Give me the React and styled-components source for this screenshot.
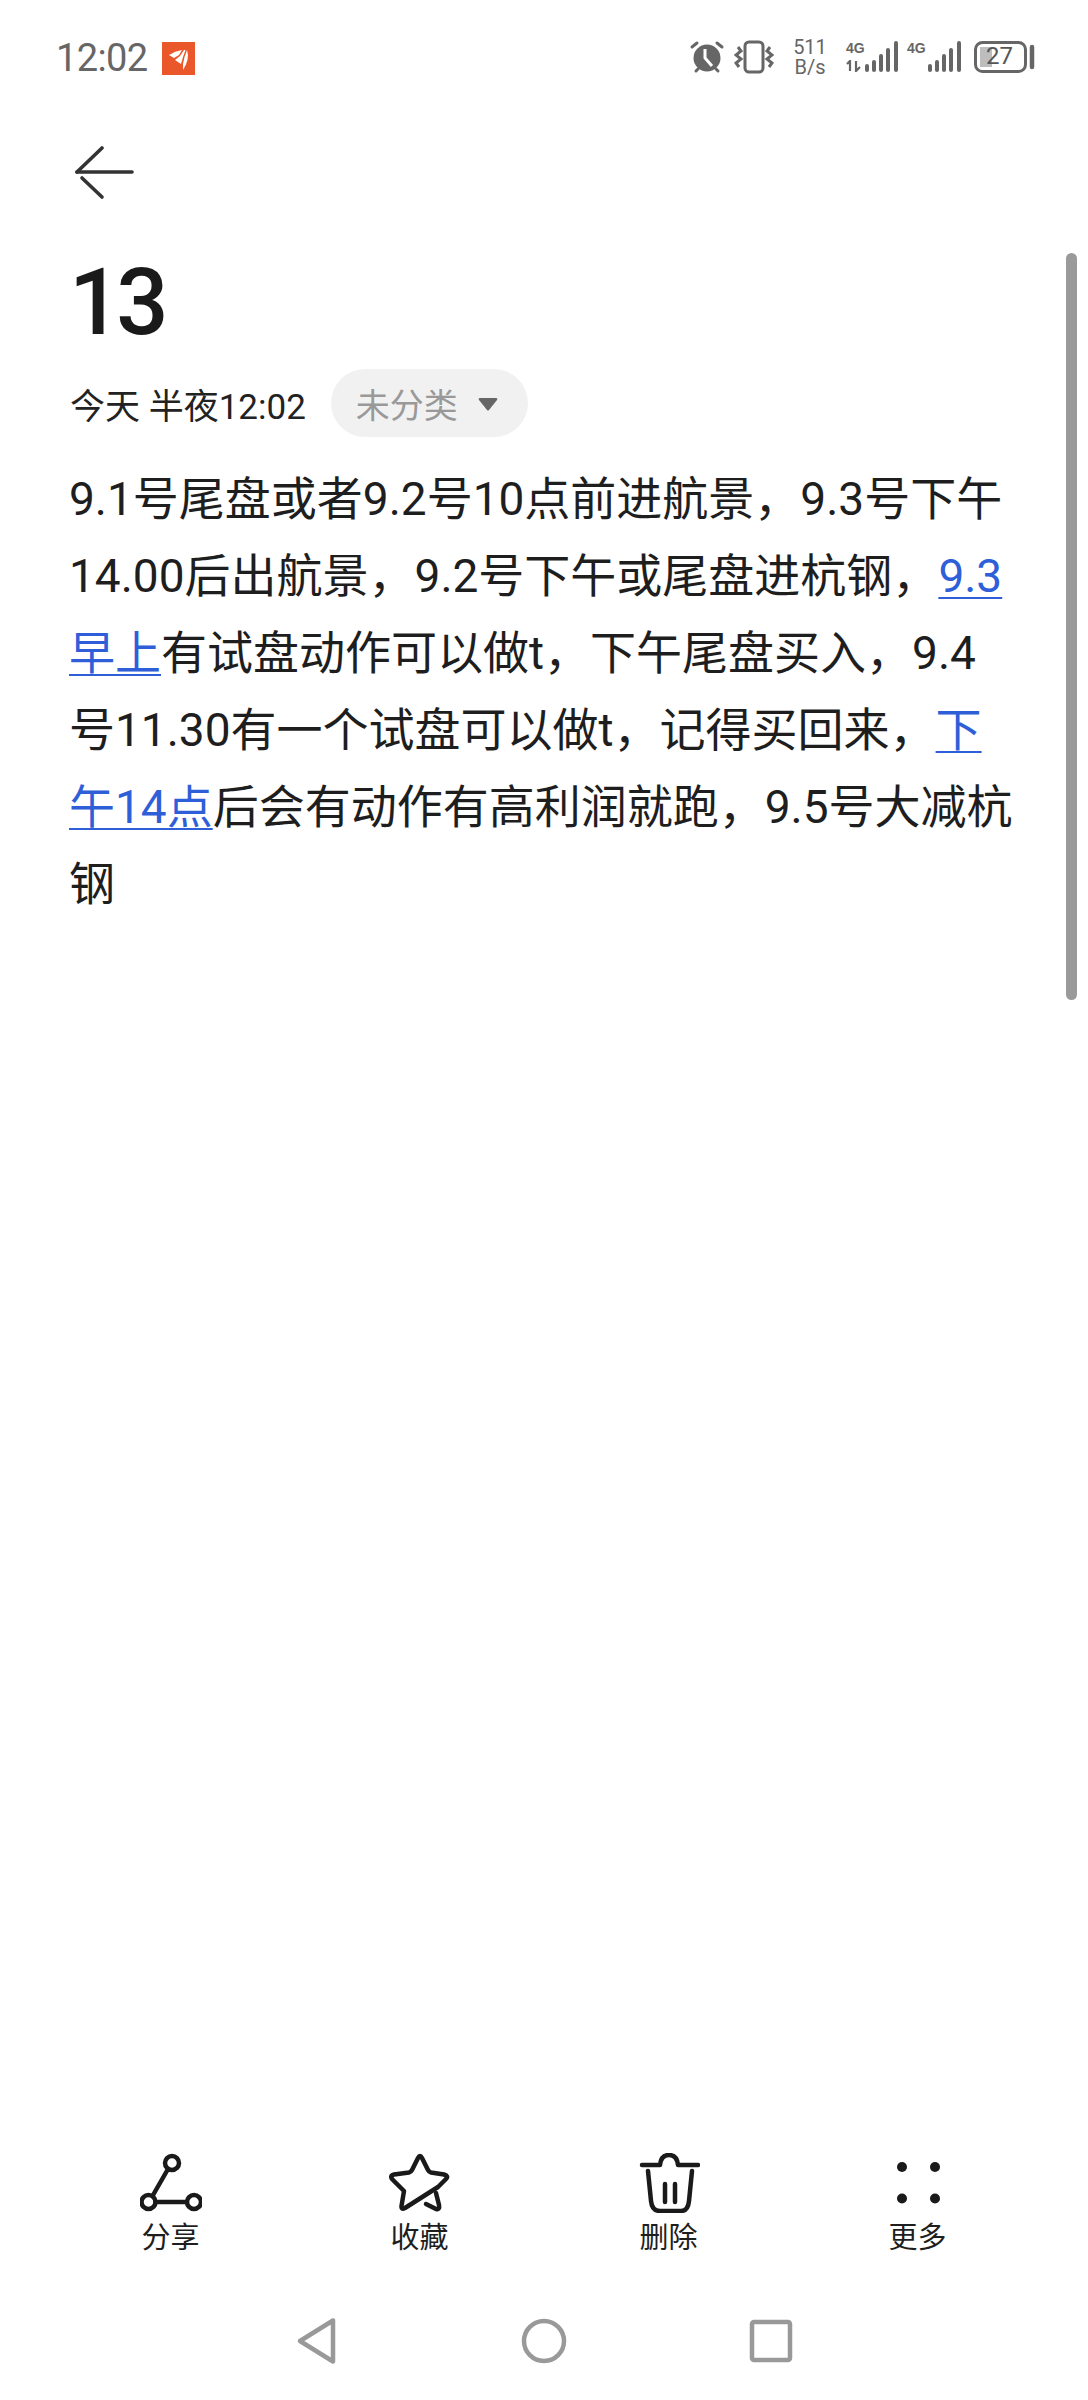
import React from "react";
import styled, { createGlobalStyle } from "styled-components";

const CJK = `Roboto, "Noto Sans CJK SC", sans-serif`;

const GlobalStyle = createGlobalStyle`
  html, body {
    margin: 0;
    padding: 0;
    background: #fff;
  }
  body {
    font-family: ${CJK};
  }
`;

const Page = styled.div`
  position: relative;
  display: flex;
  flex-direction: column;
  width: 1088px;
  height: 2400px;
  overflow: hidden;
  background: #fff;
`;

const StatusBar = styled.div`
  display: flex;
  justify-content: space-between;
  align-items: flex-start;
  height: 115px;
  padding: 38px 52px 0 56px;
  box-sizing: border-box;
  color: #666;
`;

const StatusLeft = styled.div`
  display: flex;
  align-items: center;
  gap: 14px;
`;

const Time = styled.span`
  font-size: 38px;
  line-height: 40px;
  letter-spacing: -0.6px;
  color: #666;
`;

const AppBadge = styled.svg`
  width: 33px;
  height: 33px;
  display: block;
`;

const StatusRight = styled.div`
  display: flex;
  align-items: center;
  height: 38px;
`;

const StatusIcon = styled.svg`
  display: block;
  flex: none;
  margin-right: ${(p) => p.$gap || 0}px;
`;

const Speed = styled.div`
  display: flex;
  flex-direction: column;
  align-items: center;
  width: 38px;
  margin-right: 17px;
  font-size: 20px;
  line-height: 20px;
  color: #666;
`;

const Network = styled.div`
  display: flex;
  align-items: flex-end;
  height: 32px;
  margin-right: ${(p) => p.$gap || 0}px;
`;

const NetworkLabel = styled.div`
  display: flex;
  flex-direction: column;
  width: ${(p) => p.$width}px;
  height: 32px;
  font-family: "Liberation Sans", sans-serif;
  font-weight: 700;
  font-size: 14px;
  line-height: 14px;
  color: #666;
`;

const Battery = styled.div`
  position: relative;
  width: 62px;
  height: 32px;
  flex: none;
`;

const BatteryText = styled.span`
  position: absolute;
  left: 3px;
  top: 0;
  width: 45px;
  text-align: center;
  font-size: 24px;
  line-height: 31px;
  color: #555;
`;

const Header = styled.div`
  height: 138px;
  padding: 31px 0 0 75px;
  box-sizing: border-box;
`;

const BackIcon = styled.svg`
  display: block;
`;

const Title = styled.h1`
  margin: 0 0 16px;
  padding-left: 69px;
  font-size: 92px;
  line-height: 100px;
  font-weight: 500;
  letter-spacing: -5px;
  color: #1a1a1a;
`;

const Meta = styled.div`
  display: flex;
  align-items: center;
  gap: 25px;
  height: 68px;
  margin-bottom: 24px;
  padding-left: 70px;
`;

const MetaDate = styled.span`
  font-size: 35px;
  color: #222;
`;

const Chip = styled.div`
  display: flex;
  align-items: center;
  gap: 20px;
  height: 68px;
  padding: 0 30px 0 25px;
  border-radius: 34px;
  background: #f1f1f1;
`;

const ChipText = styled.span`
  font-size: 34px;
  color: #999;
`;

const ChipCaret = styled.svg`
  display: block;
  margin-top: 2px;
`;

const Body = styled.div`
  padding-left: 69px;
  font-size: 46px;
  line-height: 77px;
  color: #1e1e1e;
`;

const Line = styled.div`
  white-space: nowrap;
`;

const DateLink = styled.span`
  color: #2f5fd8;
  text-decoration: underline;
  text-decoration-thickness: 2px;
  text-underline-offset: 5px;
`;

const Scrollbar = styled.div`
  position: absolute;
  left: 1066px;
  top: 253px;
  width: 11px;
  height: 747px;
  border-radius: 6px;
  background: #9a9a9a;
`;

const Toolbar = styled.div`
  display: grid;
  grid-template-columns: repeat(4, 249px);
  margin-top: auto;
  padding: 0 0 28px 46px;
`;

const ToolButton = styled.div`
  display: flex;
  flex-direction: column;
  align-items: center;
  gap: 9px;
`;

const ToolIcon = styled.svg`
  display: block;
  width: 62px;
  height: 60px;
  fill: none;
  stroke: #1a1a1a;
  stroke-width: 4.5;
  stroke-linecap: round;
  stroke-linejoin: round;
`;

const DotsIcon = styled(ToolIcon)`
  fill: #1a1a1a;
  stroke: none;
`;

const ToolLabel = styled.span`
  font-size: 29px;
  line-height: 32px;
  color: #1e1e1e;
`;

const NavBar = styled.div`
  display: grid;
  grid-template-columns: repeat(3, 227px);
  align-items: center;
  justify-items: center;
  height: 118px;
  padding-left: 203px;
`;

const NavIcon = styled.svg`
  display: block;
  width: 50px;
  height: 50px;
  fill: none;
  stroke: #999;
  stroke-width: 4.5;
  stroke-linejoin: round;
`;

const DataArrowsIcon = styled.svg`
  display: block;
  margin-top: 5px;
`;

const AlarmIcon = () => (
  <StatusIcon width="36" height="34" viewBox="0 0 36 34" $gap={9}>
    <circle cx="18" cy="18" r="13.5" fill="#666" />
    <path d="M3 7 L8 3 M33 7 L28 3" stroke="#666" strokeWidth="3" strokeLinecap="round" />
    <path d="M7 31 L9 29 M29 31 L27 29" stroke="#666" strokeWidth="3" strokeLinecap="round" />
    <path d="M16 9 V18 L23 26" fill="none" stroke="#fff" strokeWidth="3" />
  </StatusIcon>
);

const VibrateIcon = () => (
  <StatusIcon width="40" height="34" viewBox="0 0 40 34" fill="none" stroke="#666" $gap={17}>
    <rect x="11" y="2" width="18" height="30" rx="4" strokeWidth="3" />
    <path d="M4 7 L7 11 L2 15 L7 19 L2 23 L5 27" strokeWidth="3" />
    <path d="M36 7 L33 11 L38 15 L33 19 L38 23 L35 27" strokeWidth="3" />
  </StatusIcon>
);

const SignalBars = () => (
  <StatusIcon width="36" height="32" viewBox="0 0 36 32" stroke="#666" strokeWidth="4" strokeLinecap="round">
    <path d="M3 25 V29 M10 21 V29 M17 15 V29 M24 9 V29 M32 2 V29" />
  </StatusIcon>
);

const DataArrows = () => (
  <DataArrowsIcon width="15" height="12" viewBox="0 0 15 12" fill="none" stroke="#666" strokeWidth="2.2">
    <path d="M1 4 L4 1 V11 M10 1 V11 L14 7" />
  </DataArrowsIcon>
);

const lines = [
  [{ t: "9.1号尾盘或者9.2号10点前进航景，9.3号下午" }],
  [{ t: "14.00后出航景，9.2号下午或尾盘进杭钢，" }, { t: "9.3", link: true }],
  [{ t: "早上", link: true }, { t: "有试盘动作可以做t，下午尾盘买入，9.4" }],
  [{ t: "号11.30有一个试盘可以做t，记得买回来，" }, { t: "下", link: true }],
  [{ t: "午14点", link: true }, { t: "后会有动作有高利润就跑，9.5号大减杭" }],
  [{ t: "钢" }],
];

export default function App() {
  return (
    <Page>
      <GlobalStyle />
      <StatusBar>
        <StatusLeft>
          <Time>12:02</Time>
          <AppBadge viewBox="0 0 33 33">
            <rect width="33" height="33" fill="#e9572a" />
            <path d="M7 13 Q13 9 20 8 L17 13 L12 16 Z" fill="#fff" />
            <path d="M13 18 L18 14 L22 8 L23.5 8 L21 15 L19 22 Z" fill="#fff" />
            <path d="M21 22 L22.5 15 L25 8 Q28 17 21 28 Z" fill="#fff" />
          </AppBadge>
        </StatusLeft>
        <StatusRight>
          <AlarmIcon />
          <VibrateIcon />
          <Speed>
            <span>511</span>
            <span>B/s</span>
          </Speed>
          <Network $gap={7}>
            <NetworkLabel $width={18}>
              <span>4G</span>
              <DataArrows />
            </NetworkLabel>
            <SignalBars />
          </Network>
          <Network $gap={11}>
            <NetworkLabel $width={20}>
              <span>4G</span>
            </NetworkLabel>
            <SignalBars />
          </Network>
          <Battery>
            <svg width="62" height="32" viewBox="0 0 62 32" fill="none">
              <rect x="1.5" y="1.5" width="50" height="29" rx="7" stroke="#666" strokeWidth="3" />
              <rect x="6" y="6" width="12" height="20" fill="#bdbdbd" />
              <path d="M58 6 V26" stroke="#666" strokeWidth="4.5" strokeLinecap="round" />
            </svg>
            <BatteryText>27</BatteryText>
          </Battery>
        </StatusRight>
      </StatusBar>

      <Header>
        <BackIcon width="60" height="54" viewBox="0 0 60 54" fill="none" stroke="#333" strokeWidth="3.6" strokeLinecap="round">
          <path d="M2 26 H57" />
          <path d="M2 26 L27 2" />
          <path d="M7 32 L27 51" />
        </BackIcon>
      </Header>

      <Title>13</Title>

      <Meta>
        <MetaDate>今天 半夜12:02</MetaDate>
        <Chip>
          <ChipText>未分类</ChipText>
          <ChipCaret width="20" height="14" viewBox="0 0 20 14">
            <path d="M2 1 H18 Q20 1 19 3 L11 13 Q10 14 9 13 L1 3 Q0 1 2 1 Z" fill="#666" />
          </ChipCaret>
        </Chip>
      </Meta>

      <Body>
        {lines.map((parts, i) => (
          <Line key={i}>
            {parts.map((p, j) => (p.link ? <DateLink key={j}>{p.t}</DateLink> : <span key={j}>{p.t}</span>))}
          </Line>
        ))}
      </Body>

      <Scrollbar />

      <Toolbar>
        <ToolButton>
          <ToolIcon viewBox="0 0 62 60">
            <circle cx="32" cy="10" r="7" />
            <circle cx="8.5" cy="49" r="7" />
            <circle cx="54" cy="49" r="7" />
            <path d="M28 16 L12.5 43 M15.5 49 H47" />
          </ToolIcon>
          <ToolLabel>分享</ToolLabel>
        </ToolButton>
        <ToolButton>
          <ToolIcon viewBox="0 0 62 60">
            <path d="M29 5 Q31 1 33 5 L39 17 Q40 19 42 19.5 L55 21.5 Q60 23 57 26 L49 34 L16 55 Q12 57 12.5 53 L15 38 L4 27 Q0 23 5 21.5 L20 19.5 Q22 19 23 17 Z" />
            <path d="M47 40 L50 52 Q51 57 47 56 L37 51" />
          </ToolIcon>
          <ToolLabel>收藏</ToolLabel>
        </ToolButton>
        <ToolButton>
          <ToolIcon viewBox="0 0 62 60">
            <path d="M4 12 H22 Q23 2 31 2 Q39 2 40 12 H60" />
            <path d="M10 18 L13 48 Q14 58 22 58 H43 Q50 58 51 48 L54 18" />
            <path d="M27 31 V49 M37 31 V49" />
          </ToolIcon>
          <ToolLabel>删除</ToolLabel>
        </ToolButton>
        <ToolButton>
          <DotsIcon viewBox="0 0 62 60">
            <circle cx="15" cy="14" r="5" />
            <circle cx="48" cy="14" r="5" />
            <circle cx="15" cy="45.5" r="5" />
            <circle cx="48" cy="45.5" r="5" />
          </DotsIcon>
          <ToolLabel>更多</ToolLabel>
        </ToolButton>
      </Toolbar>

      <NavBar>
        <NavIcon viewBox="0 0 50 50">
          <path d="M8 25 L41 4.5 V45.5 Z" />
        </NavIcon>
        <NavIcon viewBox="0 0 50 50">
          <circle cx="25" cy="25" r="20" />
        </NavIcon>
        <NavIcon viewBox="0 0 50 50">
          <rect x="6" y="6" width="38" height="38" rx="2" />
        </NavIcon>
      </NavBar>
    </Page>
  );
}
